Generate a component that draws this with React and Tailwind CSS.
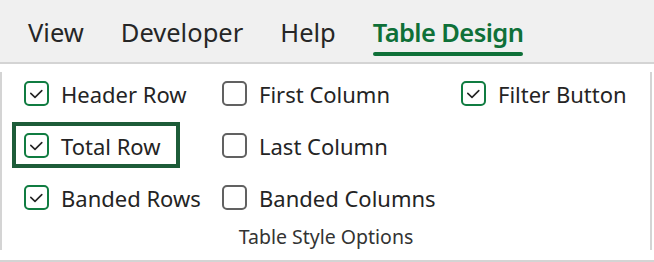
const Box = ({ checked }) => (
  <svg width="25" height="25" viewBox="0 0 25 25" className="shrink-0">
    <rect
      x="1"
      y="1"
      width="23"
      height="23"
      rx="4"
      fill="white"
      stroke={checked ? '#107c41' : '#616161'}
      strokeWidth="2"
    />
    {checked && (
      <path
        d="M6.8 12.4 L11 16.4 L17.8 9.6"
        fill="none"
        stroke="#242424"
        strokeWidth="1.6"
        strokeLinecap="round"
        strokeLinejoin="round"
      />
    )}
  </svg>
);

const Option = ({ label, checked, focused }) => (
  <div className="relative flex items-center gap-3 h-[25px]">
    {focused && (
      <div className="absolute left-[-12px] top-[-11px] w-[168px] h-[46px] border-4 border-[#1d5c39]" />
    )}
    <Box checked={checked} />
    <span className="text-[22px] leading-none text-[#242424] whitespace-nowrap">{label}</span>
  </div>
);

export default function App() {
  return (
    <div
      className="w-[654px] h-[262px] bg-white flex flex-col overflow-hidden"
      style={{ fontFamily: '"Noto Sans", "Open Sans", sans-serif' }}
    >
      {/* Ribbon tabs */}
      <div className="h-[64px] bg-[#f0f0f0] border-b-2 border-[#d4d4d4] flex items-start pl-[28px] gap-[37px] pt-[16px] text-[25.5px] text-[#262626]">
        <span className="leading-[32px]">View</span>
        <span className="leading-[32px]">Developer</span>
        <span className="leading-[32px]">Help</span>
        <div className="flex flex-col items-stretch">
          <span className="leading-[32px] font-semibold tracking-[-0.6px] text-[#0f7038]">Table Design</span>
          <div className="mt-[4px] h-[4px] rounded-full bg-[#0f7038]" />
        </div>
      </div>

      {/* Group */}
      <div className="flex-1 pt-[8px] pb-[10px] border-b-2 border-[#d4d4d4]">
        <div className="h-full w-[652px] border-l-2 border-r-2 border-[#d4d4d4] flex flex-col">
          <div className="grid grid-cols-[198px_239px_1fr] gap-y-[27px] pl-[22px] pt-[9px]">
            <Option label="Header Row" checked />
            <Option label="First Column" />
            <Option label="Filter Button" checked />
            <Option label="Total Row" checked focused />
            <Option label="Last Column" />
            <div />
            <Option label="Banded Rows" checked />
            <Option label="Banded Columns" />
            <div />
          </div>
          <div className="mt-auto pb-[1px] text-center text-[19.5px] leading-[24px] text-[#333333]">
            Table Style Options
          </div>
        </div>
      </div>
    </div>
  );
}
